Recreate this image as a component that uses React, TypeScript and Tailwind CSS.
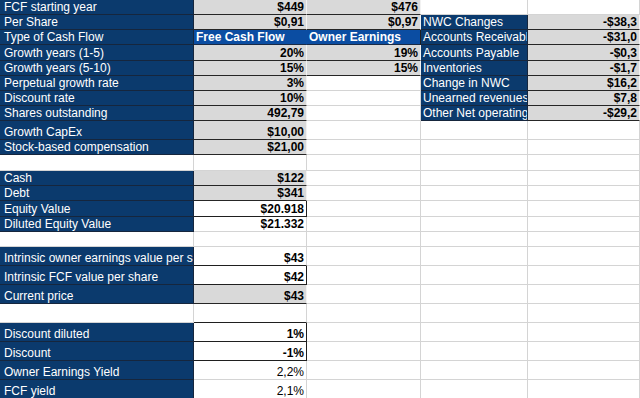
import React from 'react';

type Kind = 'n' | 'g' | 'h' | 'w' | 'b';

type CellDef = {
  t?: string;
  k?: Kind;
  bold?: boolean;
  rb?: boolean; // dark right border on gray cells
  x?: string;
};

type RowDef = { h: string; cells: CellDef[] };

const KIND: Record<Kind, string> = {
  n: 'bg-[#0B3A6D] text-white justify-start border-[#16263d]',
  g: 'bg-[#D9D9D9] text-black font-bold justify-end border-b-[#262626] border-r-[#f2f2f2]',
  h: 'bg-[#0B4DA2] text-white font-bold justify-start border-b-[#1a2a44] border-r-[#0B4DA2]',
  w: 'bg-white text-black justify-end border-[#D4D4D4]',
  b: 'bg-white text-black font-bold justify-end border-[#1f1f1f]',
};

const E: CellDef = { k: 'w' };

const rows: RowDef[] = [
  { h: 'h-[15px]', cells: [{ t: 'FCF starting year', k: 'n' }, { t: '$449', k: 'g' }, { t: '$476', k: 'g', rb: true }, E, E] },
  { h: 'h-[15px]', cells: [{ t: 'Per Share', k: 'n' }, { t: '$0,91', k: 'g' }, { t: '$0,97', k: 'g', rb: true }, { t: 'NWC Changes', k: 'n' }, { t: '-$38,3', k: 'g', rb: true }] },
  { h: 'h-[15px]', cells: [{ t: 'Type of Cash Flow', k: 'n' }, { t: 'Free Cash Flow', k: 'h' }, { t: 'Owner Earnings', k: 'h', x: 'border-r-[#1f1f1f]' }, { t: 'Accounts Receivable', k: 'n' }, { t: '-$31,0', k: 'g', rb: true }] },
  { h: 'h-[16px]', cells: [{ t: 'Growth years (1-5)', k: 'n' }, { t: '20%', k: 'g' }, { t: '19%', k: 'g', rb: true }, { t: 'Accounts Payable', k: 'n' }, { t: '-$0,3', k: 'g', rb: true }] },
  { h: 'h-[15px]', cells: [{ t: 'Growth years (5-10)', k: 'n' }, { t: '15%', k: 'g' }, { t: '15%', k: 'g', rb: true }, { t: 'Inventories', k: 'n' }, { t: '-$1,7', k: 'g', rb: true }] },
  { h: 'h-[15px]', cells: [{ t: 'Perpetual growth rate', k: 'n' }, { t: '3%', k: 'g' }, E, { t: 'Change in NWC', k: 'n' }, { t: '$16,2', k: 'g', rb: true }] },
  { h: 'h-[15px]', cells: [{ t: 'Discount rate', k: 'n' }, { t: '10%', k: 'g', rb: true }, E, { t: 'Unearned revenues', k: 'n' }, { t: '$7,8', k: 'g', rb: true }] },
  { h: 'h-[15px]', cells: [{ t: 'Shares outstanding', k: 'n' }, { t: '492,79', k: 'g', rb: true }, E, { t: 'Other Net operating', k: 'n' }, { t: '-$29,2', k: 'g', rb: true }] },
  { h: 'h-[19px]', cells: [{ t: 'Growth CapEx', k: 'n' }, { t: '$10,00', k: 'g', rb: true }, E, E, E] },
  { h: 'h-[15px]', cells: [{ t: 'Stock-based compensation', k: 'n' }, { t: '$21,00', k: 'g', rb: true }, E, E, E] },
  { h: 'h-[16px]', cells: [E, E, E, E, E] },
  { h: 'h-[15px]', cells: [{ t: 'Cash', k: 'n' }, { t: '$122', k: 'g', rb: true }, E, E, E] },
  { h: 'h-[15px]', cells: [{ t: 'Debt', k: 'n' }, { t: '$341', k: 'g', rb: true }, E, E, E] },
  { h: 'h-[16px]', cells: [{ t: 'Equity Value', k: 'n' }, { t: '$20.918', k: 'b' }, E, E, E] },
  { h: 'h-[15px]', cells: [{ t: 'Diluted Equity Value', k: 'n' }, { t: '$21.332', k: 'w', bold: true }, E, E, E] },
  { h: 'h-[15px]', cells: [E, E, E, E, E] },
  { h: 'h-[19px]', cells: [{ t: 'Intrinsic owner earnings value per share', k: 'n' }, { t: '$43', k: 'w', bold: true, x: 'border-b-[#1f1f1f]' }, E, E, E] },
  { h: 'h-[19px]', cells: [{ t: 'Intrinsic FCF value per share', k: 'n' }, { t: '$42', k: 'b' }, E, E, E] },
  { h: 'h-[19px]', cells: [{ t: 'Current price', k: 'n' }, { t: '$43', k: 'g', rb: true }, E, E, E] },
  { h: 'h-[19px]', cells: [E, { k: 'w', x: 'border-b-[#1f1f1f]' }, E, E, E] },
  { h: 'h-[19px]', cells: [{ t: 'Discount diluted', k: 'n' }, { t: '1%', k: 'b' }, E, E, E] },
  { h: 'h-[19px]', cells: [{ t: 'Discount', k: 'n' }, { t: '-1%', k: 'b' }, E, E, E] },
  { h: 'h-[19px]', cells: [{ t: 'Owner Earnings Yield', k: 'n' }, { t: '2,2%', k: 'w' }, E, E, E] },
  { h: 'h-[19px]', cells: [{ t: 'FCF yield', k: 'n' }, { t: '2,1%', k: 'w' }, E, E, E] },
];

function Cell({ c, col }: { c: CellDef; col: number }) {
  const k = c.k ?? 'w';
  return (
    <div
      className={[
        'flex items-end overflow-hidden whitespace-nowrap border-r border-b text-[12px] leading-[14px]',
        col === 0 ? 'pl-[4px] pr-[1px]' : 'px-[2px]',
        KIND[k],
        c.bold ? 'font-bold' : '',
        c.rb ? 'border-r-[#262626]' : '',
        c.x ?? '',
      ].join(' ')}
    >
      {c.t}
    </div>
  );
}

export default function App() {
  return (
    <div className="w-[640px] h-[398px] overflow-hidden bg-white font-['Liberation_Sans',Arial,sans-serif] antialiased">
      {rows.map((r, i) => (
        <div key={i} className={`grid grid-cols-[194px_113px_114px_107px_112px] ${r.h}`}>
          {r.cells.map((c, j) => (
            <Cell key={j} c={c} col={j} />
          ))}
        </div>
      ))}
    </div>
  );
}
